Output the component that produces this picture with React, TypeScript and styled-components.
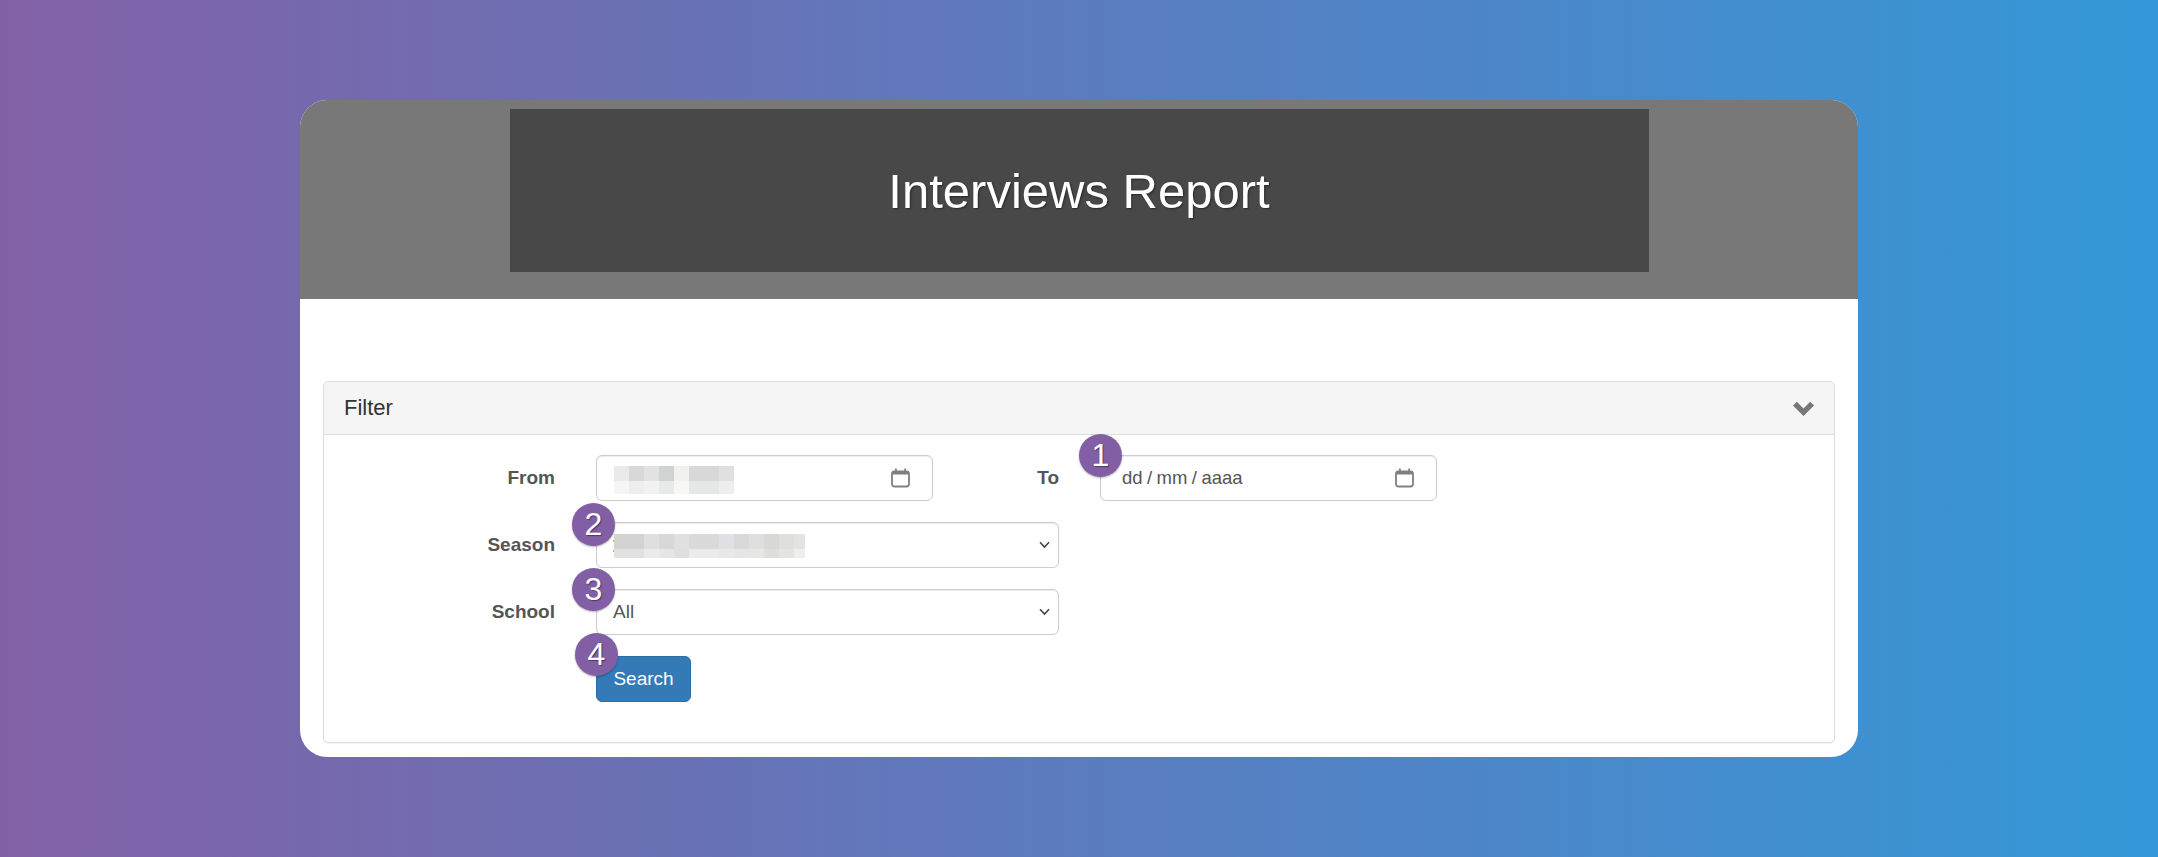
import React from 'react';
import styled, { createGlobalStyle } from 'styled-components';

const GlobalStyle = createGlobalStyle`
  html, body {
    margin: 0;
    padding: 0;
    height: 100%;
  }
  body {
    font-family: "Liberation Sans", Arial, sans-serif;
    font-size: 19px;
    color: #333;
    background: linear-gradient(to right, #8260a6, #3498d8);
    min-height: 857px;
  }
`;

const Page = styled.div`
  display: flex;
  justify-content: center;
  padding-top: 100px;
`;

const Card = styled.div`
  width: 1558px;
  height: 657px;
  background: #fff;
  border-radius: 27px;
  overflow: hidden;
`;

const Header = styled.header`
  height: 199px;
  box-sizing: border-box;
  padding-top: 9px;
  display: flex;
  justify-content: center;
  align-items: flex-start;
  background: #787878;
`;

const TitleBox = styled.div`
  width: 1139px;
  height: 163px;
  display: flex;
  align-items: center;
  justify-content: center;
  background: #484848;
`;

const Title = styled.h1`
  margin: 0;
  padding-top: 1px;
  font-size: 49px;
  font-weight: 400;
  color: #fff;
  text-shadow: 1px 1px 2px rgba(0, 0, 0, 0.45);
`;

const Body = styled.div`
  padding: 82px 23px 0;
`;

const Panel = styled.section`
  border: 1px solid #ddd;
  border-radius: 5px;
  background: #fff;
  box-shadow: 0 1px 1px rgba(0, 0, 0, 0.05);
`;

const PanelHeading = styled.div`
  height: 53px;
  box-sizing: border-box;
  padding: 0 20px;
  display: flex;
  align-items: center;
  justify-content: space-between;
  background: #f5f5f5;
  border-bottom: 1px solid #ddd;
  border-radius: 4px 4px 0 0;
`;

const PanelTitle = styled.span`
  font-size: 22px;
  color: #333;
`;

const PanelBody = styled.div`
  padding: 20px 0 40px;
  display: flex;
  flex-direction: column;
  gap: 21px;
`;

const Row = styled.div`
  display: flex;
  align-items: center;
`;

const Label = styled.label<{ $width: number }>`
  width: ${(p) => p.$width}px;
  margin-right: 41px;
  text-align: right;
  font-weight: 700;
  color: #555;
`;

const Field = styled.div<{ $width: number }>`
  position: relative;
  width: ${(p) => p.$width}px;
  height: 46px;
  box-sizing: border-box;
  padding: 0 8px 0 16px;
  display: flex;
  align-items: center;
  justify-content: space-between;
  background: #fff;
  border: 1px solid #ccc;
  border-radius: 6px;
  box-shadow: inset 0 1px 1px rgba(0, 0, 0, 0.075);
  color: #555;
`;

const DateField = styled(Field)`
  padding: 0 22px 0 17px;
`;

const DateText = styled.span`
  padding-left: 4px;
  font-size: 18.5px;
  word-spacing: -0.7px;
`;

const SearchButton = styled.button`
  position: relative;
  width: 95px;
  height: 46px;
  padding: 0;
  background: #337ab7;
  border: 1px solid #2e6da4;
  border-radius: 6px;
  color: #fff;
  font: inherit;
`;

const Badge = styled.span<{ $left: number; $top: number }>`
  position: absolute;
  left: ${(p) => p.$left}px;
  top: ${(p) => p.$top}px;
  width: 43px;
  height: 43px;
  display: flex;
  align-items: center;
  justify-content: center;
  border-radius: 50%;
  background: #825fa4;
  box-shadow: 0 1px 2px rgba(0, 0, 0, 0.3);
  color: #fff;
  font-size: 32px;
  font-weight: 400;
  text-shadow: 1px 1px 1px rgba(0, 0, 0, 0.4);
`;

const Mosaic = styled.svg<{ $left: number; $top: number }>`
  display: block;
  flex: none;
  overflow: visible;
  margin: ${(p) => p.$top}px 0 0 ${(p) => p.$left}px;
`;

const ButtonOffset = styled.div`
  margin-left: 272px;
`;

const Chevron = () => (
  <svg width="21" height="15" viewBox="0 0 21 15">
    <path d="M0 4.5 L3.8 0.7 L10.5 7.4 L17.2 0.7 L21 4.5 L10.5 15 Z" fill="#777" />
  </svg>
);

const CalendarIcon = () => (
  <svg width="19" height="20" viewBox="0 0 19 20">
    <rect x="1" y="3.5" width="17" height="15" rx="2.5" fill="none" stroke="#808080" strokeWidth="1.8" />
    <rect x="1" y="3.5" width="17" height="3" fill="#808080" />
    <rect x="4" y="0.5" width="1.8" height="3.5" fill="#808080" />
    <rect x="13.2" y="0.5" width="1.8" height="3.5" fill="#808080" />
  </svg>
);

const SelectArrow = () => (
  <svg width="11" height="8" viewBox="0 0 11 8">
    <path d="M1 1.2 L5.5 6 L10 1.2" fill="none" stroke="#444" strokeWidth="1.6" />
  </svg>
);

// the pixelated (redacted) values in the reference
const fromCells = [
  ['#eaeaea', '#d8d8d8', '#e2e2e2', '#d0d3d2', '#f2f1ef', '#d8d8d8', '#d8d8d8', '#e0e0e0'],
  ['#f6f6f6', '#eeeeec', '#f2f2f2', '#e8eae9', '#f8f7f5', '#e6e8e7', '#e6e8e7', '#eeeeee'],
];

const seasonCells = [
  ['#d2d4d2', '#d2d4d2', '#dfdfdf', '#d8d8d6', '#dfe0df', '#dadada', '#dadada', '#e0e1e4', '#d9d9d9', '#dfdfdd', '#d8d8d6', '#dfdfdc', '#e2e3e5'],
  ['#e0e1e0', '#e0e1e0', '#ebebeb', '#e6e6e6', '#dedfde', '#ebebeb', '#ebebea', '#e8e8e8', '#e6e6e6', '#e7e7e5', '#dedede', '#e4e4e2', '#eeeef0'],
];

type BlurProps = {
  cells: string[][];
  rowHeights: number[];
  width: number;
  left: number;
  top: number;
  children?: React.ReactNode;
};

const Blur = ({ cells, rowHeights, width, left, top, children }: BlurProps) => {
  const height = rowHeights[0] + rowHeights[1];
  return (
    <Mosaic $left={left} $top={top} width={width} height={height} viewBox={`0 0 ${width} ${height}`}>
      {cells.map((row, r) =>
        row.map((color, c) => (
          <rect
            key={`${r}-${c}`}
            x={c * 15}
            y={r === 0 ? 0 : rowHeights[0]}
            width={Math.min(15, width - c * 15)}
            height={rowHeights[r]}
            fill={color}
          />
        )),
      )}
      {children}
    </Mosaic>
  );
};

export default function App() {
  return (
    <>
      <GlobalStyle />
      <Page>
        <Card>
          <Header>
            <TitleBox>
              <Title>Interviews Report</Title>
            </TitleBox>
          </Header>
          <Body>
            <Panel>
              <PanelHeading>
                <PanelTitle>Filter</PanelTitle>
                <Chevron />
              </PanelHeading>
              <PanelBody>
                <Row>
                  <Label $width={231}>From</Label>
                  <DateField $width={337}>
                    <Blur cells={fromCells} rowHeights={[15, 13]} width={120} left={0} top={4} />
                    <CalendarIcon />
                  </DateField>
                  <Label $width={126}>To</Label>
                  <DateField $width={337}>
                    <DateText>dd / mm / aaaa</DateText>
                    <CalendarIcon />
                    <Badge $left={-22} $top={-22}>1</Badge>
                  </DateField>
                </Row>
                <Row>
                  <Label $width={231}>Season</Label>
                  <Field $width={463}>
                    <Blur cells={seasonCells} rowHeights={[15, 9]} width={191} left={1} top={2}>
                      <rect x="-1" y="6" width="1" height="2" fill="#e8a050" />
                      <rect x="-1" y="16" width="1" height="2" fill="#e8a050" />
                    </Blur>
                    <SelectArrow />
                    <Badge $left={-25} $top={-20}>2</Badge>
                  </Field>
                </Row>
                <Row>
                  <Label $width={231}>School</Label>
                  <Field $width={463}>
                    <span>All</span>
                    <SelectArrow />
                    <Badge $left={-25} $top={-22}>3</Badge>
                  </Field>
                </Row>
                <Row>
                  <ButtonOffset>
                    <SearchButton>
                      Search
                      <Badge $left={-22} $top={-24}>4</Badge>
                    </SearchButton>
                  </ButtonOffset>
                </Row>
              </PanelBody>
            </Panel>
          </Body>
        </Card>
      </Page>
    </>
  );
}
